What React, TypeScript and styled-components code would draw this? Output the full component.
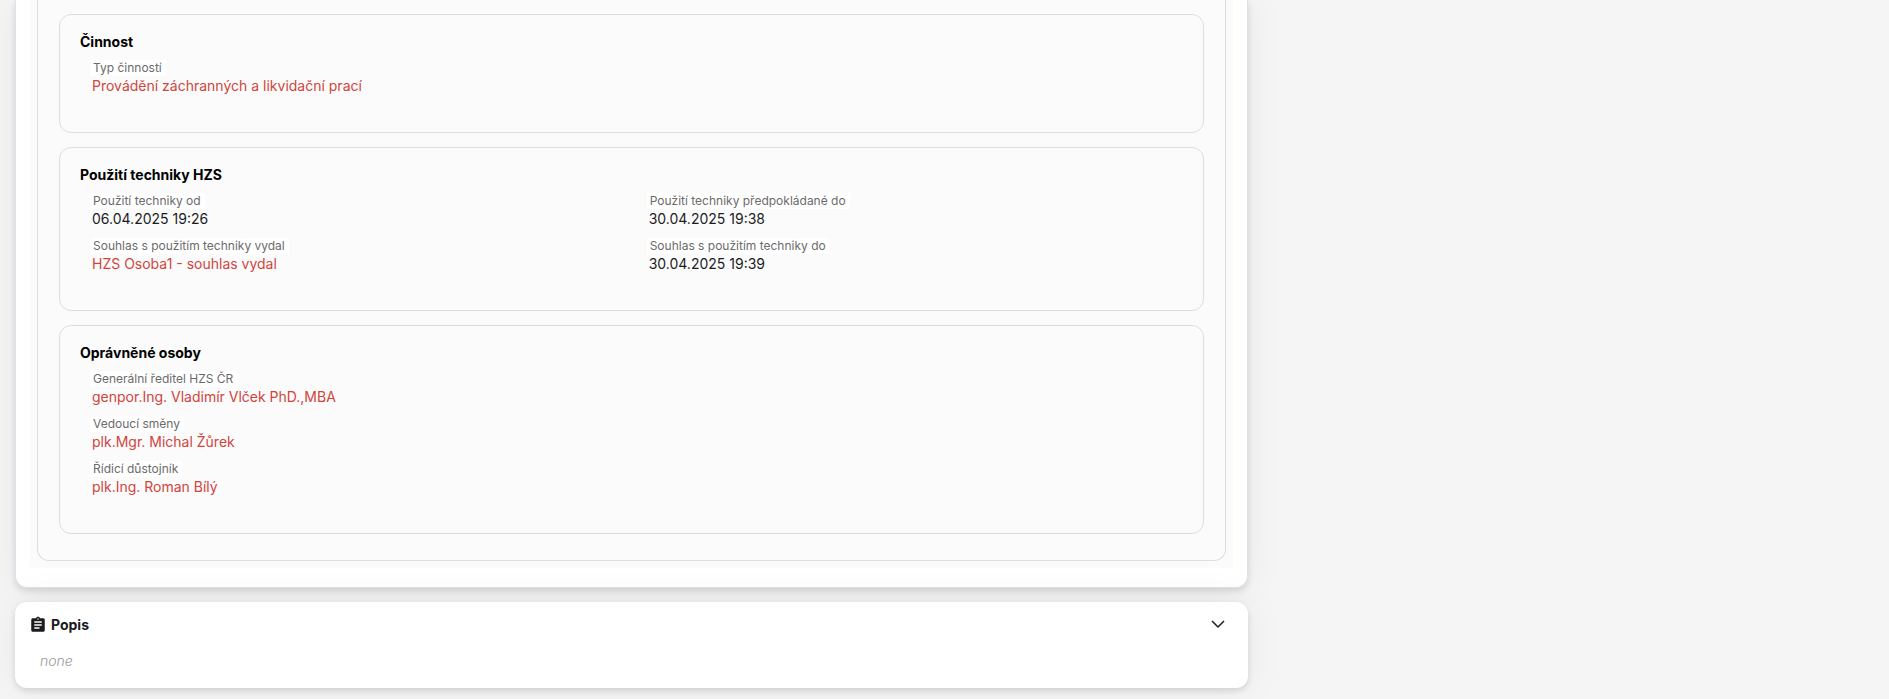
import React from "react";
import styled, { createGlobalStyle } from "styled-components";
import { ChevronDown } from "lucide-react";
import { MdAssignment } from "react-icons/md";

const GlobalStyle = createGlobalStyle`
  * { box-sizing: border-box; }
  body {
    margin: 0;
    background: #f5f5f5;
    color: #1c1b1f;
    font: 400 14px/20px Inter, "Liberation Sans", sans-serif;
  }
  h2, h3, dl, dd, p { margin: 0; }
`;

const Page = styled.div`
  display: grid;
  grid-template-columns: 2fr 1fr;
  overflow: hidden;
`;

const MainColumn = styled.main`
  display: flex;
  flex-direction: column;
  gap: 14px;
  padding: 0 11px 11px 15px;
`;

const Surface = styled.section`
  background: #fff;
  border-radius: 12px;
  box-shadow: 0 3px 6px rgba(0, 0, 0, 0.12), 0 0 40px rgba(0, 0, 0, 0.06);
`;

const DetailSurface = styled(Surface)`
  padding: 0 14px 19px;
  border: 1px solid #dfe2ea;
  border-top: 0;
  border-radius: 0 0 12px 12px;
`;

const Tray = styled.div`
  padding: 0 7px 7px;
  background: #fbfbfb;
  border-radius: 0 0 4px 4px;
`;

const GroupFrame = styled.div`
  display: flex;
  flex-direction: column;
  gap: 14px;
  padding: 14px 21px 26px;
  border: 1px solid #dedede;
  border-top: 0;
  border-radius: 0 0 12px 12px;
`;

const Group = styled.section`
  padding: 17px 0 36px 20px;
  border: 1px solid #dedede;
  border-radius: 12px;
`;

const GroupTitle = styled.h3`
  color: #000;
  font-size: 14px;
  font-weight: 700;
  line-height: 20px;
`;

const Fields = styled.dl<{ $columns: number }>`
  display: grid;
  grid-template-columns: repeat(${(p) => p.$columns}, 1fr);
  gap: 9px 0;
  margin: 8px 0 0 10px;
`;

const Label = styled.dt`
  width: fit-content;
  padding: 0 4px 0 3px;
  background: #fff;
  color: #6b6b6b;
  font-size: 12px;
  line-height: 16px;
`;

const Value = styled.dd<{ $accent?: boolean }>`
  padding-left: 2px;
  color: ${(p) => (p.$accent ? "#d0453c" : "#1c1b1f")};
`;

const DescriptionHeader = styled.header`
  display: flex;
  align-items: center;
  gap: 4px;
  padding: 10px 18px 0 14px;
`;

const DescriptionTitle = styled.h2`
  flex: 1;
  font-size: 14px;
  font-weight: 700;
  line-height: 26px;
`;

const ToggleButton = styled.button`
  display: flex;
  align-self: flex-start;
  padding: 0;
  border: 0;
  background: none;
  color: #1c1b1f;
  cursor: pointer;
`;

const EmptyText = styled.p`
  padding: 13px 25px 17px;
  color: #999;
  font-style: italic;
  font-weight: 300;
`;

interface Field {
  label: string;
  value: string;
  accent?: boolean;
}

interface FieldGroup {
  title: string;
  columns: number;
  fields: Field[];
}

const groups: FieldGroup[] = [
  {
    title: "Činnost",
    columns: 1,
    fields: [
      { label: "Typ činností", value: "Provádění záchranných a likvidační prací", accent: true },
    ],
  },
  {
    title: "Použití techniky HZS",
    columns: 2,
    fields: [
      { label: "Použití techniky od", value: "06.04.2025 19:26" },
      { label: "Použití techniky předpokládané do", value: "30.04.2025 19:38" },
      { label: "Souhlas s použitím techniky vydal", value: "HZS Osoba1 - souhlas vydal", accent: true },
      { label: "Souhlas s použitím techniky do", value: "30.04.2025 19:39" },
    ],
  },
  {
    title: "Oprávněné osoby",
    columns: 1,
    fields: [
      { label: "Generální ředitel HZS ČR", value: "genpor.Ing. Vladimír Vlček PhD.,MBA", accent: true },
      { label: "Vedoucí směny", value: "plk.Mgr. Michal Žůrek", accent: true },
      { label: "Řídicí důstojník", value: "plk.Ing. Roman Bílý", accent: true },
    ],
  },
];

export default function App() {
  return (
    <>
      <GlobalStyle />
      <Page>
        <MainColumn>
          <DetailSurface>
            <Tray>
              <GroupFrame>
                {groups.map((group) => (
                  <Group key={group.title}>
                    <GroupTitle>{group.title}</GroupTitle>
                    <Fields $columns={group.columns}>
                      {group.fields.map((field) => (
                        <div key={field.label}>
                          <Label>{field.label}</Label>
                          <Value $accent={field.accent}>{field.value}</Value>
                        </div>
                      ))}
                    </Fields>
                  </Group>
                ))}
              </GroupFrame>
            </Tray>
          </DetailSurface>
          <Surface>
            <DescriptionHeader>
              <MdAssignment size={18} />
              <DescriptionTitle>Popis</DescriptionTitle>
              <ToggleButton type="button" aria-label="Popis" aria-expanded="true">
                <ChevronDown size={24} strokeWidth={1.5} strokeLinecap="butt" strokeLinejoin="miter" />
              </ToggleButton>
            </DescriptionHeader>
            <EmptyText>none</EmptyText>
          </Surface>
        </MainColumn>
      </Page>
    </>
  );
}
